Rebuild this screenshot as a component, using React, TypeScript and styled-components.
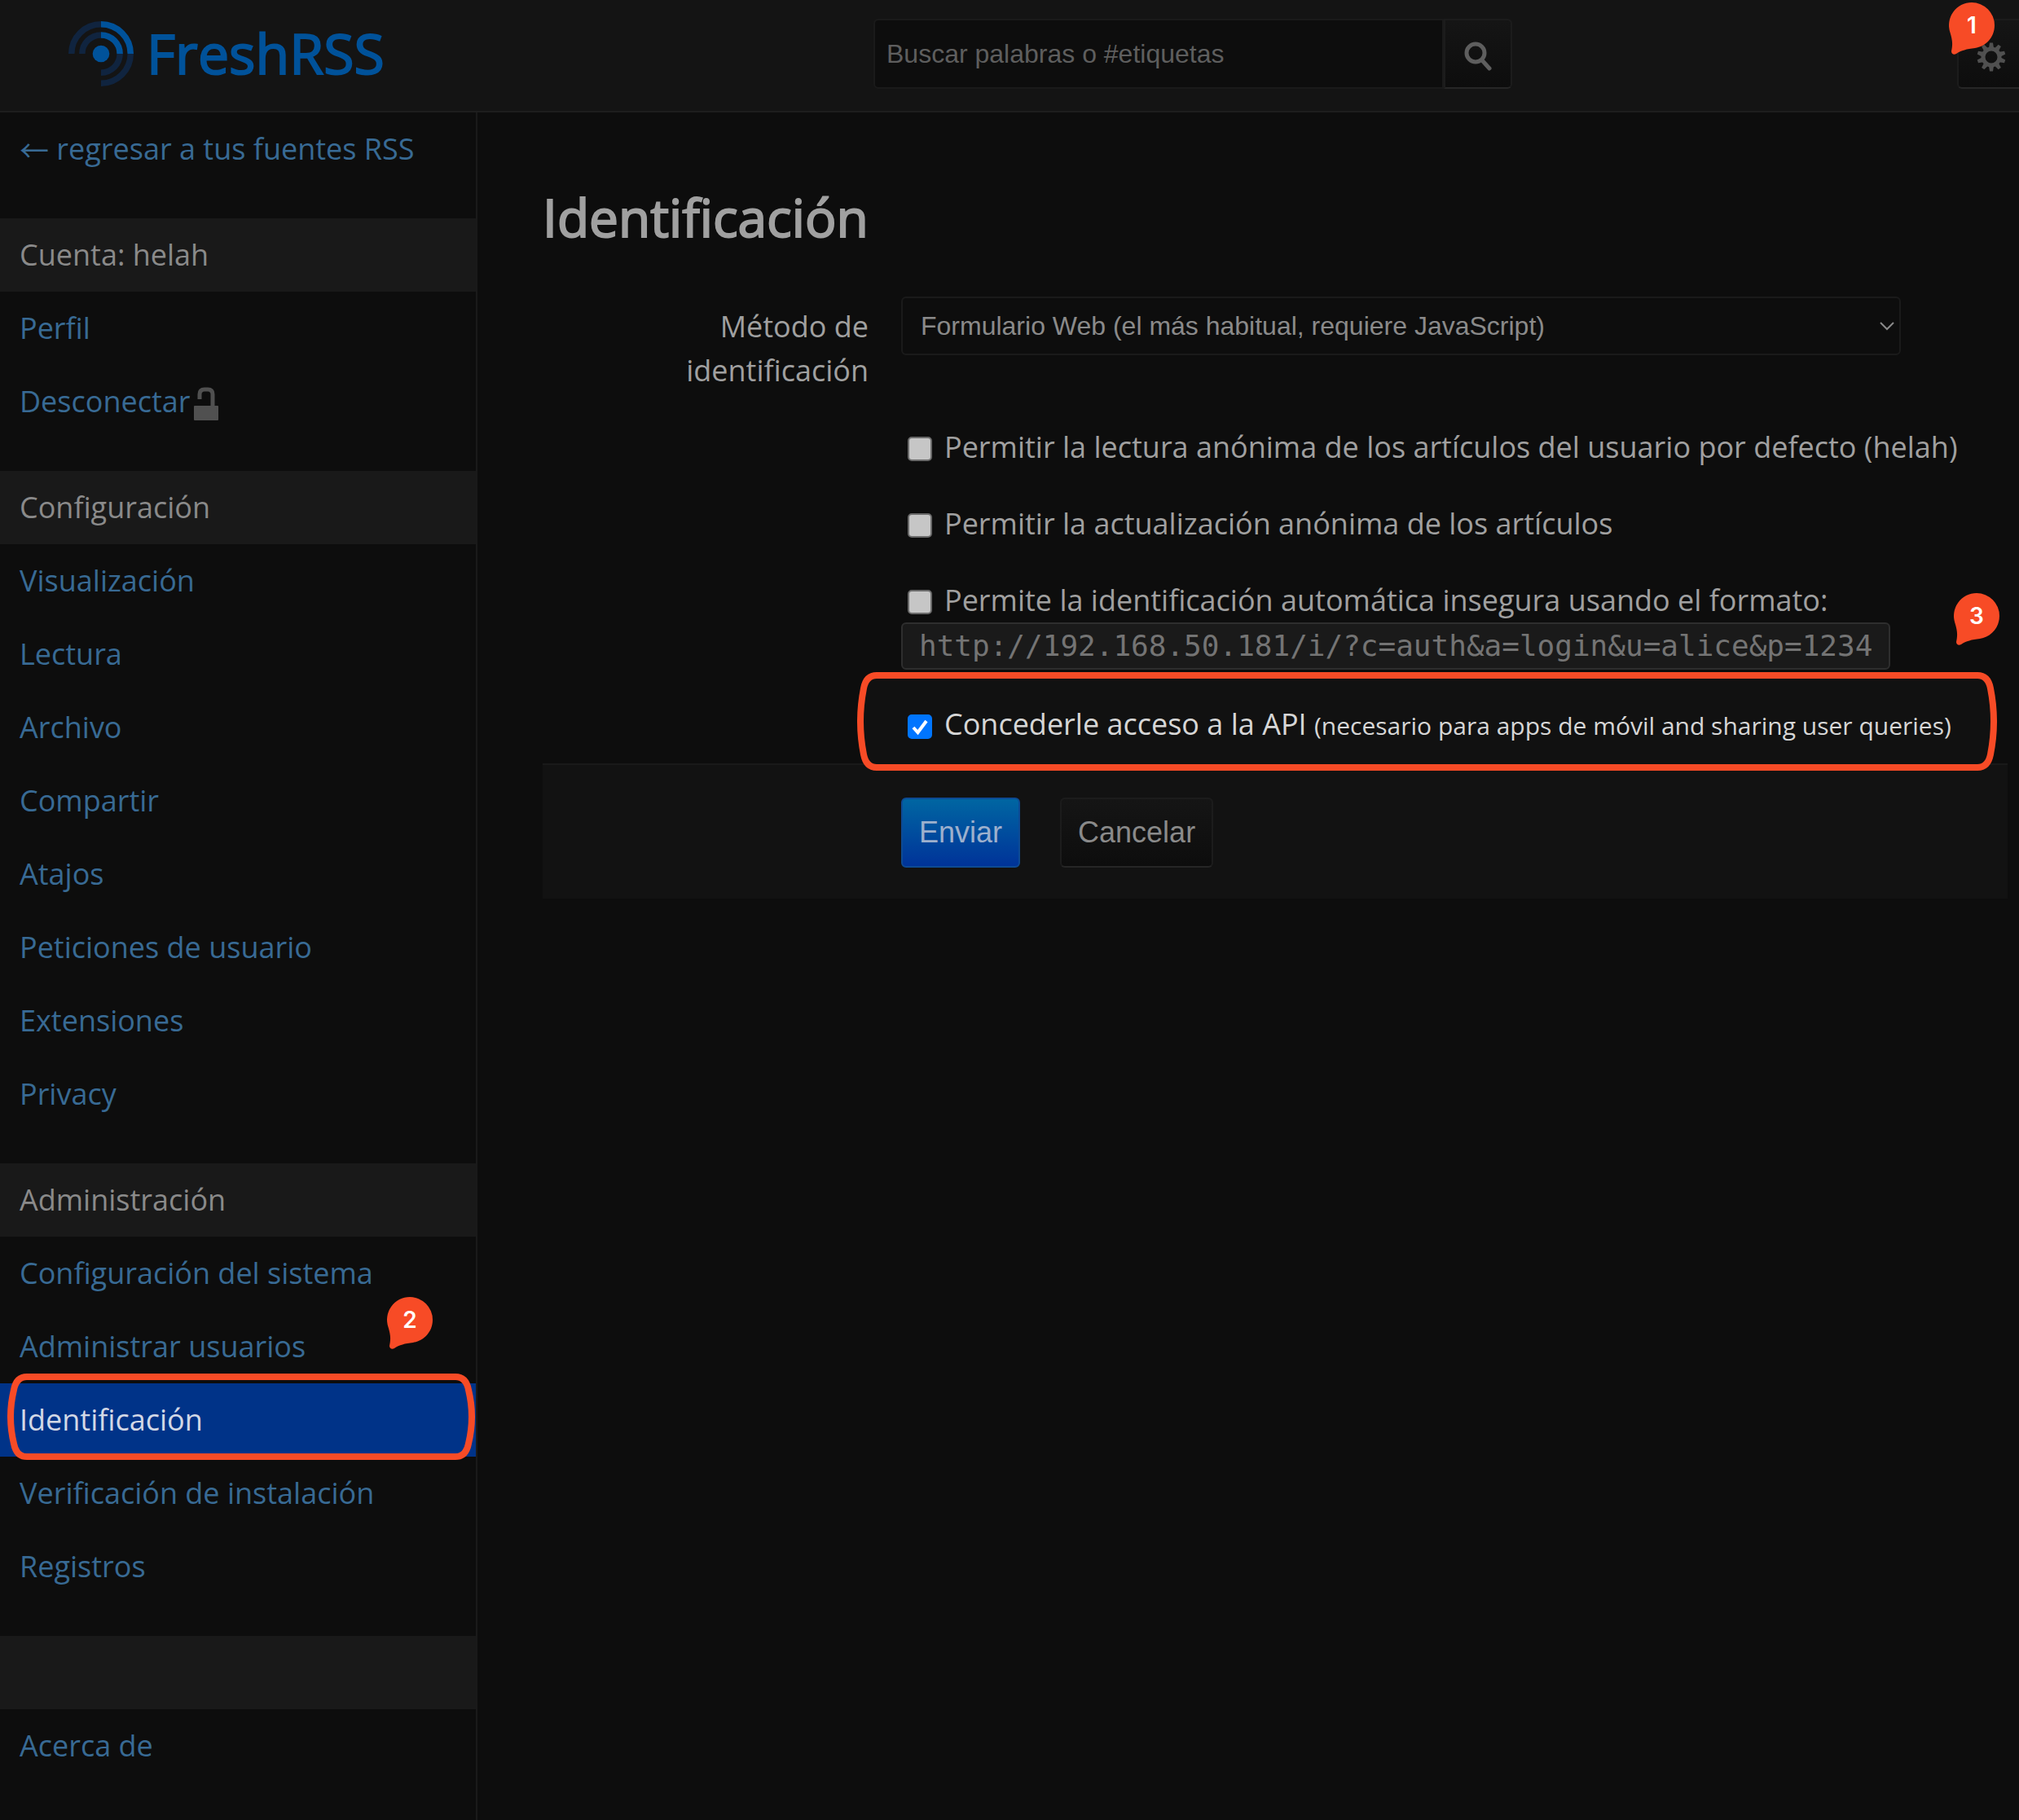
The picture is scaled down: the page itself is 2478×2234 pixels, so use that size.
import React, { useState } from 'react';
import styled, { createGlobalStyle, css } from 'styled-components';

const sans = "'Open Sans', 'Noto Sans', sans-serif";
const ui = "'Liberation Sans', Arial, sans-serif";
const accent = '#f74b26';

const GlobalStyle = createGlobalStyle`
  *, *::before, *::after { box-sizing: border-box; }
  html { background: #0d0d0d; }
  body {
    margin: 0;
    background: #0d0d0d;
    color: #a0a0a0;
    font: 36px/54px ${sans};
    overflow-x: hidden;
  }
`;

const Page = styled.div`
  display: flex;
  flex-direction: column;
  min-height: 100vh;
`;

const Header = styled.header`
  display: grid;
  grid-template-columns: 1072px 1fr auto;
  align-items: center;
  height: 138px;
  padding-bottom: 4px;
  background: #141414;
  border-bottom: 2px solid #1e1e1e;
`;

const Brand = styled.a`
  display: flex;
  align-items: center;
  gap: 16px;
  padding-left: 84px;
  color: #00529a;
  font-size: 68px;
  line-height: 76px;
  -webkit-text-stroke: 2px currentColor;
  text-decoration: none;
`;

const BrandName = styled.span`
  padding-bottom: 2px;
`;

const SearchForm = styled.form`
  display: flex;
  width: 784px;
  height: 86px;
`;

const SearchInput = styled.input`
  flex: 1;
  min-width: 0;
  padding: 0 14px;
  border: 2px solid #1a1a1a;
  border-radius: 6px 0 0 6px;
  background: #0d0d0d;
  color: #a0a0a0;
  font: 32px ${ui};
  &::placeholder { color: #5e5e5e; opacity: 1; }
`;

const buttonFace = css`
  border: 2px solid #1c1c1c;
  border-bottom-color: #262626;
  background: linear-gradient(#151515, #0d0d0d);
`;

const SearchButton = styled.button`
  display: flex;
  align-items: center;
  justify-content: center;
  width: 84px;
  padding: 4px 0 0;
  ${buttonFace}
  border-radius: 0 6px 6px 0;
`;

const GearWrap = styled.div`
  position: relative;
`;

const GearButton = styled.button`
  display: flex;
  align-items: center;
  width: 76px;
  height: 86px;
  padding: 8px 0 0 22px;
  ${buttonFace}
  border-right: 0;
  border-radius: 6px 0 0 6px;
`;

const Body = styled.div`
  display: flex;
  flex: 1;
`;

const Sidebar = styled.nav`
  width: 586px;
  flex: none;
  border-right: 2px solid #1a1a1a;
`;

const NavGroup = styled.ul`
  margin: 0 0 40px;
  padding: 0;
  list-style: none;
`;

const NavHeading = styled.li`
  height: 90px;
  padding-left: 24px;
  background: #191919;
  color: #8a8a8a;
  line-height: 90px;
`;

const NavItem = styled.li`
  position: relative;
`;

const NavLink = styled.a<{ $active?: boolean }>`
  display: flex;
  align-items: center;
  height: 90px;
  padding-left: 24px;
  background: ${p => (p.$active ? '#003388' : 'transparent')};
  color: ${p => (p.$active ? '#d2d8e6' : '#386a94')};
  line-height: 90px;
  text-decoration: none;
  white-space: pre;
  svg { margin: 4px 0 0 4px; }
`;

const Arrow = styled.span`
  font-family: 'Noto Sans CJK JP', ${ui};
`;

const Main = styled.main`
  flex: 1;
  min-width: 0;
  padding: 84px 14px 0 80px;
`;

const Title = styled.h1`
  margin: 0 0 52px;
  color: #a0a0a0;
  font-size: 64px;
  font-weight: 400;
  -webkit-text-stroke: 2px currentColor;
  line-height: 90px;
`;

const FormRow = styled.div`
  position: relative;
  display: grid;
  grid-template-columns: 400px 1fr;
  column-gap: 40px;
  margin-bottom: 40px;
`;

const FieldLabel = styled.label`
  padding-top: 10px;
  padding-left: 160px;
  text-align: right;
`;

const Controls = styled.div`
  grid-column: 2;
  min-width: 0;
`;

const SelectWrap = styled.div`
  position: relative;
  max-width: 1227px;
`;

const Select = styled.select`
  appearance: none;
  display: block;
  width: 100%;
  height: 72px;
  padding: 0 22px;
  border: 2px solid #1a1a1a;
  border-radius: 6px;
  background: #0d0d0d;
  color: #8a8a8a;
  font: 32px ${ui};
`;

const Chevron = styled.svg`
  position: absolute;
  right: 8px;
  top: 31px;
  pointer-events: none;
`;

const CheckLabel = styled.label<{ $bright?: boolean }>`
  display: flex;
  align-items: center;
  gap: 15px;
  padding-left: 8px;
  color: ${p => (p.$bright ? '#d6d6d6' : '#a0a0a0')};
  white-space: nowrap;
`;

const Checkbox = styled.input`
  appearance: none;
  width: 30px;
  height: 30px;
  margin: 4px 0 0;
  border: 2px solid #6a6a6a;
  border-radius: 5px;
  background: #c6c6c6;
  &:checked {
    border-color: #0075ff;
    background: #0075ff url("data:image/svg+xml,%3Csvg xmlns='http://www.w3.org/2000/svg' viewBox='0 0 26 26'%3E%3Cpath d='M5 14l5.500 6L21 6' fill='none' stroke='white' stroke-width='4'/%3E%3C/svg%3E") center / 26px 26px no-repeat;
  }
`;

const Small = styled.small`
  font-size: 30px;
`;

const Code = styled.code`
  display: inline-block;
  height: 58px;
  padding: 0 20px;
  border: 2px solid #2e2e2e;
  border-radius: 6px;
  background: #1a1a1a;
  color: #747474;
  font: 36px/54px 'DejaVu Sans Mono', monospace;
  vertical-align: top;
`;

const ApiRow = styled(FormRow)`
  z-index: 0;
  margin-bottom: 19px;
`;

const Actions = styled.div`
  display: flex;
  gap: 49px;
  padding: 40px 0 38px 440px;
  border-top: 2px solid #191919;
  background: #121212;
`;

const Button = styled.button<{ $primary?: boolean }>`
  height: 86px;
  padding: 0 20px;
  border-radius: 6px;
  font: 36px ${ui};
  ${p =>
    p.$primary
      ? css`
          border: 2px solid #0d4a94;
          background: linear-gradient(#0066a2, #003399);
          color: #9db0cd;
        `
      : css`
          ${buttonFace}
          color: #8a8a8a;
        `}
`;

const PinBox = styled.span<{ $left: number; $top: number }>`
  position: absolute;
  left: ${p => p.$left}px;
  top: ${p => p.$top}px;
  width: 56px;
  height: 64px;
  color: #fff;
  font: 600 28px/56px Inter, sans-serif;
  text-align: center;
  z-index: 2;
  svg { position: absolute; inset: 0; z-index: -1; }
`;

const Frame = styled.svg<{ $left: number; $top: number; $under?: boolean }>`
  position: absolute;
  left: ${p => p.$left}px;
  top: ${p => p.$top}px;
  z-index: ${p => (p.$under ? -1 : 1)};
  pointer-events: none;
`;

function Pin({ n, left, top }: { n: number; left: number; top: number }) {
  return (
    <PinBox $left={left} $top={top}>
      <svg width="56" height="64" viewBox="0 0 56 64" fill={accent} aria-hidden="true">
        <path d="M28 0A28 28 0 0 1 56 28C56 43 45 54 32 56C22 57 15 59 9 63C6 65 3 63 3 60C5 51 4 45 1.500 37A28 28 0 0 1 28 0Z" />
      </svg>
      {n}
    </PinBox>
  );
}

interface HighlightProps {
  width: number;
  height: number;
  left: number;
  top: number;
  under?: boolean;
}

function Highlight({ width: w, height: h, left, top, under }: HighlightProps) {
  const d =
    `M24 4H${w - 24}Q${w - 11} 4 ${w - 8} 20Q${w} ${h / 2} ${w - 8} ${h - 20}Q${w - 11} ${h - 4} ${w - 24} ${h - 4}` +
    `H24Q11 ${h - 4} 8 ${h - 20}Q0 ${h / 2} 8 20Q11 4 24 4Z`;
  return (
    <Frame $left={left} $top={top} $under={under} width={w} height={h} aria-hidden="true">
      <path d={d} fill={under ? '#111111' : 'none'} stroke={accent} strokeWidth="8" />
    </Frame>
  );
}

function Logo() {
  return (
    <svg width="80" height="80" viewBox="0 0 256 256" strokeWidth="0" aria-hidden="true">
      <circle cx="128" cy="128" r="33" fill="#00529a" />
      <g fill="none" strokeWidth="24">
        <g stroke="#10243f">
          <path d="M12 128A116 116 0 0 1 128 12" />
          <path d="M54 128A74 74 0 0 1 128 54" />
          <path d="M128 244A116 116 0 0 0 244 128" />
          <path d="M128 202A74 74 0 0 0 202 128" />
        </g>
        <g stroke="#00529a">
          <path d="M128 12A116 116 0 0 1 244 128" />
          <path d="M128 54A74 74 0 0 1 202 128" />
        </g>
      </g>
    </svg>
  );
}

function SearchIcon() {
  return (
    <svg width="36" height="38" viewBox="0 0 36 38" fill="none" stroke="#5e5e5e" aria-hidden="true">
      <circle cx="15" cy="16" r="11" strokeWidth="5" />
      <path d="M23 25L32 35" strokeWidth="5" strokeLinecap="round" />
    </svg>
  );
}

function GearIcon() {
  const teeth = Array.from({ length: 10 }, (_, i) => i * 36);
  return (
    <svg width="36" height="36" viewBox="-18 -18 36 36" aria-hidden="true">
      <circle r="10" fill="none" stroke="#505050" strokeWidth="5" />
      {teeth.map(a => (
        <path key={a} d="M-3 -11L-2 -17.500H2L3 -11Z" fill="#505050" transform={`rotate(${a})`} />
      ))}
    </svg>
  );
}

function LockIcon() {
  return (
    <svg width="32" height="42" viewBox="0 0 32 42" aria-hidden="true">
      <path d="M8 16V10Q8 4 14 4H18Q24 4 24 10V24" fill="none" stroke="#505050" strokeWidth="5" />
      <rect x="1" y="24" width="30" height="18" rx="1" fill="#505050" />
    </svg>
  );
}

const settings = ['Visualización', 'Lectura', 'Archivo', 'Compartir', 'Atajos', 'Peticiones de usuario', 'Extensiones', 'Privacy'];

export default function App() {
  const [anonRead, setAnonRead] = useState(false);
  const [anonRefresh, setAnonRefresh] = useState(false);
  const [unsafe, setUnsafe] = useState(false);
  const [api, setApi] = useState(true);

  return (
    <Page>
      <GlobalStyle />
      <Header>
        <Brand href="#"><Logo /><BrandName>FreshRSS</BrandName></Brand>
        <SearchForm role="search">
          <SearchInput type="search" placeholder="Buscar palabras o #etiquetas" aria-label="Buscar" />
          <SearchButton type="button" aria-label="Buscar"><SearchIcon /></SearchButton>
        </SearchForm>
        <GearWrap>
          <GearButton type="button" aria-label="Configuración"><GearIcon /></GearButton>
          <Pin n={1} left={-10} top={-20} />
        </GearWrap>
      </Header>
      <Body>
        <Sidebar>
          <NavGroup>
            <NavItem><NavLink href="#"><Arrow>←</Arrow> regresar a tus fuentes RSS</NavLink></NavItem>
          </NavGroup>
          <NavGroup>
            <NavHeading>Cuenta: helah</NavHeading>
            <NavItem><NavLink href="#">Perfil</NavLink></NavItem>
            <NavItem><NavLink href="#">Desconectar<LockIcon /></NavLink></NavItem>
          </NavGroup>
          <NavGroup>
            <NavHeading>Configuración</NavHeading>
            {settings.map(s => (
              <NavItem key={s}><NavLink href="#">{s}</NavLink></NavItem>
            ))}
          </NavGroup>
          <NavGroup>
            <NavHeading>Administración</NavHeading>
            <NavItem><NavLink href="#">Configuración del sistema</NavLink></NavItem>
            <NavItem>
              <NavLink href="#">Administrar usuarios</NavLink>
              <Pin n={2} left={475} top={-16} />
            </NavItem>
            <NavItem>
              <NavLink href="#" $active aria-current="page">Identificación</NavLink>
              <Highlight width={574} height={106} left={9} top={-12} />
            </NavItem>
            <NavItem><NavLink href="#">Verificación de instalación</NavLink></NavItem>
            <NavItem><NavLink href="#">Registros</NavLink></NavItem>
          </NavGroup>
          <NavGroup>
            <NavHeading />
            <NavItem><NavLink href="#">Acerca de</NavLink></NavItem>
          </NavGroup>
        </Sidebar>
        <Main>
          <Title>Identificación</Title>
          <FormRow>
            <FieldLabel htmlFor="auth">Método de identificación</FieldLabel>
            <Controls>
              <SelectWrap>
                <Select id="auth">
                  <option>Formulario Web (el más habitual, requiere JavaScript)</option>
                </Select>
                <Chevron width="18" height="11" viewBox="0 0 18 11" fill="none" stroke="#8a8a8a" strokeWidth="2">
                  <path d="M1 1L9 9L17 1" />
                </Chevron>
              </SelectWrap>
            </Controls>
          </FormRow>
          <FormRow>
            <Controls>
              <CheckLabel>
                <Checkbox type="checkbox" checked={anonRead} onChange={e => setAnonRead(e.target.checked)} />
                Permitir la lectura anónima de los artículos del usuario por defecto (helah)
              </CheckLabel>
            </Controls>
          </FormRow>
          <FormRow>
            <Controls>
              <CheckLabel>
                <Checkbox type="checkbox" checked={anonRefresh} onChange={e => setAnonRefresh(e.target.checked)} />
                Permitir la actualización anónima de los artículos
              </CheckLabel>
            </Controls>
          </FormRow>
          <FormRow>
            <Controls>
              <CheckLabel>
                <Checkbox type="checkbox" checked={unsafe} onChange={e => setUnsafe(e.target.checked)} />
                Permite la identificación automática insegura usando el formato:
              </CheckLabel>
              <Code>http://192.168.50.181/i/?c=auth&amp;a=login&amp;u=alice&amp;p=1234</Code>
            </Controls>
            <Pin n={3} left={1732} top={18} />
          </FormRow>
          <ApiRow>
            <Highlight width={1399} height={121} left={386} top={-37} under />
            <Controls>
              <CheckLabel $bright>
                <Checkbox type="checkbox" checked={api} onChange={e => setApi(e.target.checked)} />
                <span>Concederle acceso a la API <Small>(necesario para apps de móvil and sharing user queries)</Small></span>
              </CheckLabel>
            </Controls>
          </ApiRow>
          <Actions>
            <Button type="submit" $primary>Enviar</Button>
            <Button type="reset">Cancelar</Button>
          </Actions>
        </Main>
      </Body>
    </Page>
  );
}
